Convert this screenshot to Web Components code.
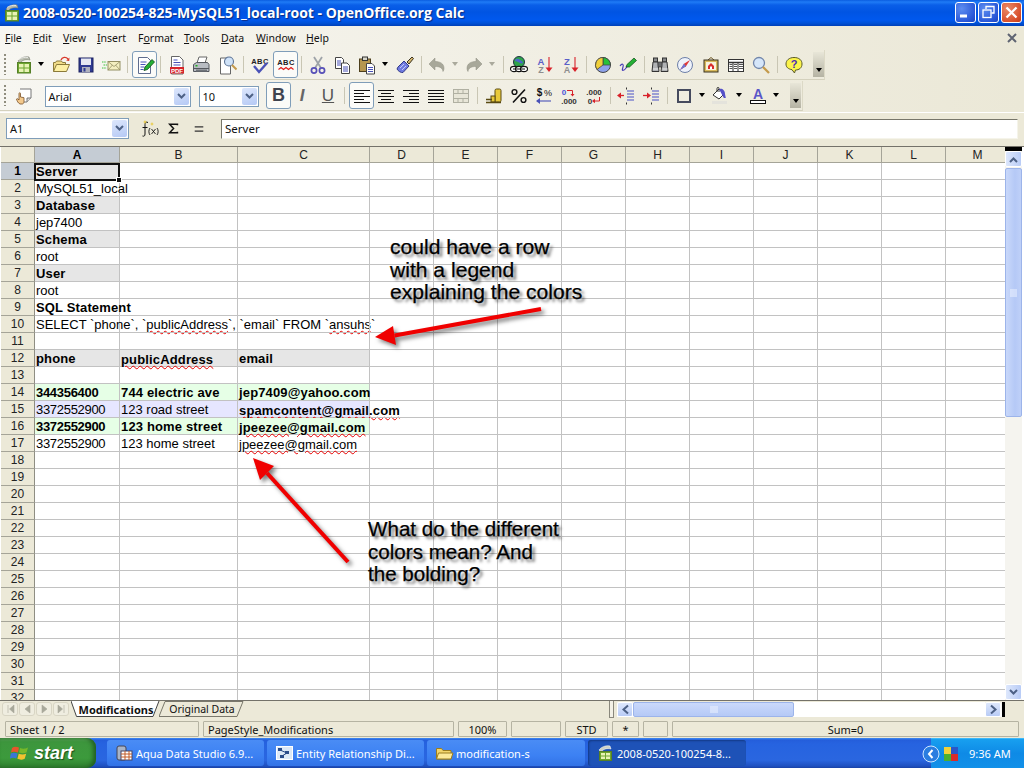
<!DOCTYPE html>
<html><head><meta charset="utf-8"><title>OpenOffice.org Calc</title>
<style>
html,body{margin:0;padding:0;background:#ece9d8;}
body{width:1024px;height:768px;overflow:hidden;position:relative;font-family:"Noto Sans","Liberation Sans",sans-serif;}
#page{display:flex;flex-direction:column;width:1024px;height:768px;}
</style></head><body>
<div id="page">
<xp-titlebar>2008-0520-100254-825-MySQL51_local-root - OpenOffice.org Calc</xp-titlebar>
<xp-menubar></xp-menubar>
<xp-toolbar row="1"></xp-toolbar>
<xp-toolbar row="2"></xp-toolbar>
<xp-formula></xp-formula>
<xp-sheet></xp-sheet>
<xp-tabs></xp-tabs>
<xp-status></xp-status>
<xp-taskbar></xp-taskbar>
</div>
<sheet-note style="left:390px;top:236px;font-size:21.1px">could have a row<br>with a legend<br>explaining the colors</sheet-note>
<sheet-note style="left:368px;top:518px;font-size:20.6px">What do the different<br>colors mean? And<br>the bolding?</sheet-note>
<sheet-arrow x1="541" y1="309" x2="375" y2="337" h1="393,326" h2="396,345"></sheet-arrow>
<sheet-arrow x1="348" y1="562" x2="253" y2="458" h1="274,466" h2="260,480"></sheet-arrow>
<script>
const ICONS={
new:`<path d="M4 6C6 3 11 1 15 2l1 3C12 4 8 5 6 8z" fill="#b9bdb0" stroke="#7c7f74" stroke-width=".6"/><path d="M5 4.500c3-2 6-2.500 9-2" stroke="#fff" fill="none" stroke-width=".7"/><rect x="3.500" y="7.500" width="13" height="10.500" fill="#6da52f" stroke="#557f27"/><path d="M5 9h4.500v3.500H5zM10.500 9H15v3.500h-4.500zM5 13.500h4.500V17H5zM10.500 13.500H15V17h-4.500z" fill="#e8f3b5"/>`,
open:`<path d="M2.500 16.500V7.500h2l1-1.500h5l1 1.500h3v2" fill="#f1dc88" stroke="#8b7a3a"/><path d="M2.500 16.500l3-7h13l-3 7z" fill="#fdf0a4" stroke="#8b7a3a"/><path d="M10 5C11 2 15 1.500 17 4" fill="none" stroke="#d8382a" stroke-width="1.300"/><path d="M18.500 2.500l-.3 3.500-3-.5z" fill="#d8382a"/>`,
save:`<rect x="3" y="3" width="14" height="14" fill="#2f3a92" stroke="#1c2260"/><rect x="5" y="3.500" width="10" height="6.500" fill="#e6e8f2"/><rect x="6" y="12" width="8" height="5" fill="#aeb0bd"/><rect x="7.500" y="13" width="2" height="3.500" fill="#2f3a92"/>`,
mail:`<rect x="7" y="6.500" width="12" height="8.500" fill="#f4efc0" stroke="#948f63"/><path d="M7 6.500l6 5 6-5M7 15l4.500-5M19 15l-4.500-5" fill="none" stroke="#948f63" stroke-width=".8"/><path d="M1 7h4.500M2.500 10h3.500M1 13h4.500" stroke="#3fc23f" stroke-width="1" stroke-dasharray="1.500 .7"/>`,
edit:`<path d="M3.500 2.500h9l3 3v13h-12z" fill="#fff" stroke="#5f6d8e"/><path d="M5.500 7h6M5.500 9.500h5M5.500 12h4M5.500 14.500h3" stroke="#4a52b8" stroke-width="1"/><path d="M9 15.500l1-3.500L17 4.500l2.500 2.500-7 7.500z" fill="#25b035" stroke="#0c4a15" stroke-width=".8"/>`,
pdf:`<path d="M4.500 1.500h8l3.500 3.500v14H4.500z" fill="#fff" stroke="#666"/><path d="M6.500 5h4M6.500 7.500h7M6.500 10h7" stroke="#4a52b8"/><rect x="3" y="12" width="14" height="6.500" fill="#d6242a"/><text x="10" y="17.500" font-size="6" font-weight="bold" fill="#fff" text-anchor="middle" font-family="Liberation Sans">PDF</text>`,
print:`<path d="M6 8l2-6h8l-2 6z" fill="#fff" stroke="#666"/><path d="M2.500 9.500l3-2h11l1.500 2v7H2.500z" fill="#b8bcc2" stroke="#55585e"/><path d="M2.500 13.500h15.500" stroke="#55585e"/><rect x="4.500" y="10" width="2" height="1.500" fill="#22b222"/><rect x="5" y="14.500" width="11" height="2" fill="#70747a"/>`,
prev:`<path d="M3.500 3h7l3 3v13h-10z" fill="#fff" stroke="#666"/><circle cx="12" cy="6.500" r="4.500" fill="#cfe2f8" stroke="#5d7496" stroke-width="1.100"/><path d="M15 10l4.500 4.500" stroke="#c49a4c" stroke-width="2"/>`,
spell:`<text x="10" y="8.500" font-size="7.500" font-weight="bold" fill="#222" text-anchor="middle" font-family="Liberation Sans" letter-spacing=".4">ABC</text><path d="M4 11l5 6 8-9" fill="none" stroke="#4a52b8" stroke-width="2.400"/>`,
aspell:`<text x="10" y="10" font-size="7.500" font-weight="bold" fill="#222" text-anchor="middle" font-family="Liberation Sans" letter-spacing=".4">ABC</text><path d="M2.500 14.500l2.500-2 2.500 2 2.500-2 2.500 2 2.500-2 2.500 2" fill="none" stroke="#e01818" stroke-width="1.100"/>`,
cut:`<path d="M6 2l7 11M14 2L7 13" stroke="#9ea3a8" stroke-width="1.800"/><circle cx="6" cy="15.500" r="2.600" fill="none" stroke="#5750b8" stroke-width="1.700"/><circle cx="14" cy="15.500" r="2.600" fill="none" stroke="#5750b8" stroke-width="1.700"/>`,
copy:`<path d="M3.500 2.500h6l2 2v9h-8z" fill="#fff" stroke="#444"/><path d="M5 6h4M5 8h4M5 10h4" stroke="#4a52b8"/><path d="M9.500 8h5.500l2.500 2.500v8h-8z" fill="#fff" stroke="#444"/><path d="M11 12h5M11 14h5M11 16h5" stroke="#4a52b8"/>`,
paste:`<rect x="2.500" y="4" width="11" height="12.500" fill="#b6964f" stroke="#4d3f1c"/><rect x="5.500" y="2" width="5" height="3.500" fill="#d6d6ca" stroke="#333"/><path d="M9.500 8.500h5.500l2.500 2.500v8h-8z" fill="#fff" stroke="#444"/><path d="M11 12.500h5M11 14.500h5M11 16.500h5" stroke="#4a52b8"/>`,
brush:`<path d="M3 12l6-6 5 5-6 6.500C6 18 3 16 2 14z" fill="#6f7ae0" stroke="#333a88"/><path d="M5 13l4-4M7 15l4-4" stroke="#c5cbf4"/><path d="M12 7l5-5 1.500 1.500L14 9z" fill="#d3b56d" stroke="#3b3320"/>`,
undo:`<path d="M2 9l6-6v3.500c5 0 9 2 9 7 0 1-.3 2-1 3-.5-3.500-3-5-8-5V15z" fill="#a8a89a" stroke="#8d8d80" stroke-width=".5"/>`,
redo:`<path d="M18 9l-6-6v3.500c-5 0-9 2-9 7 0 1 .3 2 1 3 .5-3.500 3-5 8-5V15z" fill="#a8a89a" stroke="#8d8d80" stroke-width=".5"/>`,
globe:`<circle cx="10" cy="7" r="5.500" fill="#2ea44a" stroke="#234"/><path d="M6 5c2-2 4-1 5 0s3 1 3 3c-2 1-3 0-5-1s-3 0-3-2z" fill="#4c66c8"/><g fill="#fff" stroke="#111" stroke-width="1.100"><ellipse cx="5" cy="14" rx="3.500" ry="2.600"/><ellipse cx="10" cy="14" rx="3.500" ry="2.600"/><ellipse cx="15" cy="14" rx="3.500" ry="2.600"/></g><path d="M4 14h12" stroke="#111"/>`,
az:`<text x="7" y="9.500" font-size="9.500" font-weight="bold" fill="#5a60c8" text-anchor="middle" font-family="Liberation Sans">A</text><text x="7" y="18" font-size="9" font-weight="bold" fill="#8e8e8e" text-anchor="middle" font-family="Liberation Sans">Z</text><path d="M15 2v12" stroke="#d8222a" stroke-width="1.100"/><path d="M11.500 12.500h7L15 17z" fill="#d8222a"/>`,
za:`<text x="7" y="9.500" font-size="9.500" font-weight="bold" fill="#5a60c8" text-anchor="middle" font-family="Liberation Sans">Z</text><text x="7" y="18" font-size="9" font-weight="bold" fill="#8e8e8e" text-anchor="middle" font-family="Liberation Sans">A</text><path d="M15 2v12" stroke="#d8222a" stroke-width="1.100"/><path d="M11.500 12.500h7L15 17z" fill="#d8222a"/>`,
chart:`<circle cx="10" cy="10" r="7.500" fill="#8ea2ea" stroke="#444"/><path d="M10 10V2.500A7.500 7.500 0 0 1 17.500 10z" fill="#27c03a" stroke="#444" stroke-width=".8"/><path d="M10 10V2.500A7.500 7.500 0 0 0 4 14.500z" fill="#f0cf3a" stroke="#444" stroke-width=".8"/>`,
draw:`<path d="M2 11c2-3 4-2 3 1s-1 4 1 3 2-3 4-4" fill="none" stroke="#4a3fb8" stroke-width="1.200"/><path d="M8 12l1-2.500L16 3l2.500 2.500-7 6.500z" fill="#25b035" stroke="#0c4a15" stroke-width=".7"/>`,
find:`<rect x="3.500" y="3" width="4" height="4" fill="#888a8c" stroke="#333"/><rect x="12.500" y="3" width="4" height="4" fill="#888a8c" stroke="#333"/><path d="M3 7h5l1 9.500H2zM12 7h5l1 9.500h-7z" fill="#b0b2b4" stroke="#333"/><rect x="8" y="7" width="4" height="5" fill="#6a6c6e" stroke="#333" stroke-width=".7"/><path d="M3 14h5M12.500 14h5" stroke="#eee"/>`,
nav:`<circle cx="10" cy="10" r="7.500" fill="#eef2fa" stroke="#6d7fa8"/><path d="M15 5l-6 3.800-4 6.200 6-3.800z" fill="#e03838"/><path d="M9 8.800L5 15l6-3.800z" fill="#6a78d8"/>`,
gallery:`<path d="M7 5l3-2.500L13 5" fill="none" stroke="#6a5320"/><rect x="3" y="5" width="14" height="12" fill="#d8b95a" stroke="#3a3320"/><rect x="5" y="7" width="10" height="8" fill="#f7f2dc"/><path d="M7 11l3-3 3 3v3H7z" fill="#d92b2b"/><rect x="9" y="11.500" width="2" height="2.500" fill="#fff"/>`,
table:`<rect x="2.500" y="4.500" width="15" height="12" fill="#fff" stroke="#333"/><path d="M2.500 7.500h15" stroke="#333" stroke-width="1.500"/><path d="M7 7v9.500M12 7v9.500" stroke="#333"/><path d="M8 9.500h3M13 9.500h4M8 11.500h3M13 11.500h4M8 13.500h3M13 13.500h4M3.500 9.500h3M3.500 11.500h3M3.500 13.500h3" stroke="#555"/>`,
zoom:`<circle cx="8" cy="8" r="5.500" fill="#d5e6fa" stroke="#7286aa" stroke-width="1.300"/><path d="M12 12l6 6" stroke="#c49a4c" stroke-width="2.300"/>`,
help:`<path d="M10 2.500c5 0 8 2.500 8 6.500s-3 6-6.500 6l-1 3-2.500-3.300C4.500 14 2 12.500 2 9s3-6.500 8-6.500z" fill="#fbf34a" stroke="#5a5a2a"/><text x="10" y="13" font-size="11" font-weight="bold" fill="#4a2eb0" text-anchor="middle" font-family="Liberation Sans">?</text>`,
style:`<path d="M6 3h11v9l-4 4H8" fill="#fff" stroke="#777"/><path d="M13 16v-4h4" fill="#ddd" stroke="#777"/><path d="M6 18c-2-1-3-3-3.500-5l1.200-.3L5 14V7.500c0-1 1.500-1 1.500 0V11l3.500.7v3.800c0 1.500-1 2.500-1.500 2.500z" fill="#f3c98d" stroke="#7a5128" stroke-width=".8"/>`,
left:`<path d="M2 4.500h16M2 7.500h10M2 10.500h16M2 13.500h10M2 16.500h16" stroke="#111" stroke-width="1"/>`,
center:`<path d="M2 4.500h16M5 7.500h10M2 10.500h16M5 13.500h10M2 16.500h16" stroke="#111" stroke-width="1"/>`,
right:`<path d="M2 4.500h16M8 7.500h10M2 10.500h16M8 13.500h10M2 16.500h16" stroke="#111" stroke-width="1"/>`,
just:`<path d="M2 4.500h16M2 7.500h16M2 10.500h16M2 13.500h16M2 16.500h16" stroke="#111" stroke-width="1"/>`,
merge:`<rect x="2.500" y="3.500" width="15" height="13" fill="#e8e6d8" stroke="#b0b0a2"/><path d="M2.500 7.500h15M2.500 12.500h15M7 3.500v4M12 3.500v4M7 12.500v4M12 12.500v4" stroke="#b0b0a2"/>`,
coin:`<rect x="11" y="3" width="6" height="13" rx="1.500" fill="#e8c93a" stroke="#5a4a12"/><rect x="7" y="10" width="4" height="6" fill="#e8c93a" stroke="#5a4a12"/><path d="M2 13.500h6M2 16.500h15" stroke="#5a4a12" stroke-width="1.400"/>`,
pct:`<circle cx="5.500" cy="6" r="2.400" fill="none" stroke="#111" stroke-width="1.400"/><circle cx="14.500" cy="14" r="2.400" fill="none" stroke="#111" stroke-width="1.400"/><path d="M16 3.500L4 16.500" stroke="#111" stroke-width="1.600"/>`,
cur:`<text x="5.500" y="10" font-size="10" font-weight="bold" fill="#111" text-anchor="middle" font-family="Liberation Sans">$</text><text x="14" y="10" font-size="9" fill="#111" text-anchor="middle" font-family="Liberation Sans">%</text><path d="M3 15h14" stroke="#4a52b8" stroke-width="1.100"/><path d="M2 15l4-3v6z" fill="#4a52b8"/>`,
decadd:`<text x="5" y="8.500" font-size="8" font-weight="bold" fill="#4a52d8" text-anchor="middle" font-family="Liberation Sans">0</text><path d="M8 4.500h5.500V9" fill="none" stroke="#d8222a"/><path d="M11.500 8h4l-2 2.500z" fill="#d8222a"/><text x="10" y="17.500" font-size="8" font-weight="bold" fill="#333" text-anchor="middle" font-family="Liberation Sans">.000</text>`,
decdel:`<text x="10" y="8.500" font-size="8" font-weight="bold" fill="#333" text-anchor="middle" font-family="Liberation Sans">.000</text><text x="6" y="17.500" font-size="8" font-weight="bold" fill="#333" text-anchor="middle" font-family="Liberation Sans">0</text><path d="M15.500 11v4H10" fill="none" stroke="#d8222a"/><path d="M11 12.800v4.400L8 15z" fill="#d8222a"/>`,
inddec:`<path d="M10.500 1.500v2M10.500 16.500v2" stroke="#333"/><path d="M11 5h7M11 8h7M11 11h7M11 14h7" stroke="#4a52c8" stroke-width="1.100"/><path d="M8 9.500H3" stroke="#d8222a" stroke-width="1.300"/><path d="M1 9.500l4-3v6z" fill="#d8222a"/>`,
indinc:`<path d="M10.500 1.500v2M10.500 16.500v2" stroke="#333"/><path d="M11 5h7M11 8h7M11 11h7M11 14h7" stroke="#4a52c8" stroke-width="1.100"/><path d="M2 9.500h5" stroke="#d8222a" stroke-width="1.300"/><path d="M10 9.500l-4-3v6z" fill="#d8222a"/>`,
border:`<rect x="4" y="4" width="12" height="12" fill="none" stroke="#454a5e" stroke-width="2"/>`,
bucket:`<path d="M3 9l6-6 5 5-5 5z" fill="#fff" stroke="#333"/><path d="M7 6V2.500c0-1.500 2-1.500 2 0V6" fill="none" stroke="#333"/><path d="M9 3c3-1 6 1 6 5l.8 4-2 0z" fill="#5550c8"/><rect x="2" y="15" width="15" height="3" fill="#e4e3dc"/>`,
fcolor:`<text x="10" y="13" font-size="14" font-weight="bold" fill="#5a55c8" text-anchor="middle" font-family="Liberation Sans">A</text><rect x="2.500" y="14.500" width="15" height="3" fill="#fff" stroke="#111"/>`
};
const svg=(n,w=20,h=20)=>`<svg width="${w}" height="${h}" viewBox="0 0 ${w} ${h}">${ICONS[n]||''}</svg>`;
const shadow=(el,html)=>{const r=el.attachShadow({mode:'open'});r.innerHTML=html;return r;};
const UI='"Noto Sans","Liberation Sans",sans-serif';

class XpTitlebar extends HTMLElement{constructor(){super();shadow(this,`<style>
:host{display:flex;align-items:center;height:26px;flex:none;box-sizing:border-box;padding:0 2px 1px 2px;
background:linear-gradient(180deg,#0a5de0 0,#1f7bf6 2px,#0a5fe8 5px,#0054e3 12px,#0058ee 20px,#0052d8 23px,#0040b8 26px);}
.ic{width:20px;height:20px;flex:none}
.t{flex:1;margin-left:1px;color:#fff;font:bold 14px "Open Sans","Liberation Sans",sans-serif;white-space:nowrap;text-shadow:1px 1px 1px #0b2a80;}
.b{width:21px;height:21px;margin-left:2px;box-sizing:border-box;border:1px solid #fff;border-radius:3px;flex:none;display:flex;align-items:center;justify-content:center;
background:radial-gradient(circle at 30% 30%,#5d8df0,#2a58d8 70%,#1c45c0);}
.c{background:radial-gradient(circle at 30% 30%,#ea8a68,#d9512c 70%,#c23c1a);}
</style><span class="ic">${svg('new')}</span><span class="t"><slot></slot></span>
<span class="b"><svg width="19" height="19"><rect x="4" y="11.500" width="7" height="3" fill="#fff"/></svg></span>
<span class="b"><svg width="19" height="19"><path d="M7 6V3.500h8V10h-2.500" fill="none" stroke="#fff" stroke-width="1.300"/><rect x="4" y="7" width="8" height="7.500" fill="none" stroke="#fff" stroke-width="1.300"/></svg></span>
<span class="b c"><svg width="19" height="19"><path d="M4.500 4.500l10 10M14.500 4.500l-10 10" stroke="#fff" stroke-width="2.300"/></svg></span>`);}}
customElements.define('xp-titlebar',XpTitlebar);

class XpMenubar extends HTMLElement{constructor(){super();
const m=[['F','ile',28],['E','dit',30],['V','iew',34],['I','nsert',41],['F|o','rmat',46],['T','ools',37],['D','ata',35],['W','indow',50],['H','elp',40]];
const h=m.map(([a,b,w])=>{let s;if(a.includes('|')){const[p,q]=a.split('|');s=`${p}<u>${q}</u>${b}`}else s=`<u>${a}</u>${b}`;return `<span style="width:${w}px">${s}</span>`}).join('');
shadow(this,`<style>:host{display:flex;align-items:center;height:24px;flex:none;box-sizing:border-box;padding-left:5px;padding-right:5px;
background:linear-gradient(90deg,#f7f6f1,#ebe8d7);font:10.5px ${UI};color:#111;}
span{display:block;flex:none}.x{margin-left:auto;width:14px;height:14px}u{text-underline-offset:1px}</style>${h}
<svg class="x" viewBox="0 0 14 14"><path d="M3 3l8 8M11 3l-8 8" stroke="#5f6472" stroke-width="2"/></svg>`);}}
customElements.define('xp-menubar',XpMenubar);

class ToolBtn extends HTMLElement{constructor(){super();shadow(this,`<style>
:host{display:flex;align-items:center;justify-content:center;flex:none;box-sizing:border-box;height:100%}
:host([active]){background:#fbfbf8;border:1px solid #7f9db9;border-radius:3px;margin-top:1px;margin-bottom:1px;height:auto;align-self:stretch;}
svg{display:block}</style><span id="c" style="display:contents"></span>`);}
connectedCallback(){this.shadowRoot.getElementById('c').innerHTML=svg(this.getAttribute('icon'),+this.getAttribute('w')||20);}}
customElements.define('tool-btn',ToolBtn);

class XpCombo extends HTMLElement{constructor(){super();shadow(this,`<style>
:host{display:flex;align-items:center;flex:none;box-sizing:border-box;height:21px;background:#fff;border:1px solid #7f9db9;padding:1px;font:11px ${UI};color:#111;}
span{flex:1;padding-left:2px;white-space:nowrap}
i{display:flex;align-items:center;justify-content:center;width:15px;height:100%;flex:none;border-radius:2px;background:linear-gradient(160deg,#dde7fc,#b5c9f5);}
</style><span><slot></slot></span><i><svg width="11" height="9"><path d="M2 2l3.500 3.500L9 2" fill="none" stroke="#4d6185" stroke-width="2"/></svg></i>`);}}
customElements.define('xp-combo',XpCombo);

const ROW1=[['new',24,25],['ar',41],['open',61],['save',86],['mail',111],['s',127],['edit',144.5,25,1],['s',160],['pdf',177],['print',201],['prev',227],['s',243],['spell',260],['aspell',285.5,25,1],['s',301],['cut',318],['copy',342],['paste',367],['ar',385],['brush',405],['s',421],['undo',437],['arg',455],['redo',474],['arg',492],['s',503],['globe',519],['az',544],['za',570],['s',586],['chart',603],['draw',628],['s',644],['find',660],['nav',685],['gallery',711],['table',736],['zoom',761],['s',777],['help',794]];
const ROW2=[['style',24,25],['combo',117.5,146,'Arial'],['combo',228.5,60,'10'],['B',278.5,25,1],['I',302],['U',328],['s',344],['left',361.5,25,1],['center',386],['right',411],['just',436],['merge',461],['s',477],['coin',494],['pct',519],['cur',544],['decadd',569],['decdel',594],['s',610],['inddec',626],['indinc',651],['s',667],['border',684],['ar',702],['bucket',720],['ar',739],['fcolor',758],['ar',776]];
class XpToolbar extends HTMLElement{constructor(){super();shadow(this,`<style>
:host{display:block;height:31px;flex:none;box-sizing:border-box;background:linear-gradient(90deg,#f7f6f1,#ebe8d7);}
.bar{display:flex;align-items:stretch;height:30px;box-sizing:border-box;border-right:1px solid #dcd9c6;border-bottom:1px solid #d4d1bd;position:relative;}
.grip{width:2px;margin:4px 0 4px 4px;flex:none;background:repeating-linear-gradient(180deg,#8f8d7e 0,#8f8d7e 2px,transparent 2px,transparent 4px);}
.sep{width:1px;flex:none;background:#c9c6b4;margin-top:6px;margin-bottom:6px}
.ar{width:10px;flex:none;display:flex;align-items:center;justify-content:center}
.more{width:11px;flex:none;margin:2px 0;position:relative;background:linear-gradient(180deg,#e8e6d8,#b5b3a3);}
.more:after{content:"";position:absolute;left:3px;bottom:5px;border:3px solid transparent;border-top:4px solid #000;border-bottom:0;width:0;height:0}
</style><div class="bar" id="b"></div>`);}
connectedCallback(){const row=this.getAttribute('row');const items=row==='1'?ROW1:ROW2;
const b=this.shadowRoot.getElementById('b');const barW=row==='1'?825:803;b.style.width=barW+'px';
const grip=document.createElement('div');grip.className='grip';b.append(grip);let x=6;
const put=(el,c,w)=>{const left=c-w/2;el.style.marginLeft=(left-x)+'px';el.style.width=w+'px';x=left+w;b.append(el);};
for(const it of items){const[n,c,w,act]=it;let el;
 if(n==='s'){el=document.createElement('div');el.className='sep';put(el,c,1);}
 else if(n==='ar'||n==='arg'){el=document.createElement('div');el.className='ar';el.innerHTML=`<svg width="8" height="5"><path d="M1 0h6L4 4z" fill="${n==='ar'?'#000':'#aaa99c'}"/></svg>`;put(el,c,10);}
 else if(n==='combo'){el=document.createElement('xp-combo');el.style.alignSelf='center';el.style.marginTop='1px';el.textContent=it[3];put(el,c,w);}
 else if(n==='B'||n==='I'||n==='U'){el=document.createElement('tool-txt');if(act)el.setAttribute('active','');el.setAttribute('k',n);put(el,c,25);}
 else{el=document.createElement('tool-btn');el.setAttribute('icon',n);if(act)el.setAttribute('active','');put(el,c,w||25);}
}
const more=document.createElement('div');more.className='more';const mc=row==='1'?818:795.5;put(more,mc,11);}
}
class ToolTxt extends HTMLElement{constructor(){super();shadow(this,`<style>
:host{display:flex;align-items:center;justify-content:center;flex:none;box-sizing:border-box}
:host([active]){background:#fbfbf8;border:1px solid #7f9db9;border-radius:3px;margin-top:1px;margin-bottom:1px;}
span{font:17px "Liberation Sans",sans-serif;color:#3f4450}</style><span id="s"></span>`);}
connectedCallback(){const k=this.getAttribute('k'),s=this.shadowRoot.getElementById('s');s.textContent=k;
if(k==='B')s.style.fontWeight='bold',s.style.fontSize='18px';if(k==='I')s.style.fontStyle='italic',s.style.fontWeight='bold',s.style.color='#666';if(k==='U')s.style.textDecoration='underline',s.style.color='#555';}}
customElements.define('tool-txt',ToolTxt);
customElements.define('xp-toolbar',XpToolbar);

class XpFormula extends HTMLElement{constructor(){super();shadow(this,`<style>
:host{display:flex;align-items:center;height:34px;flex:none;box-sizing:border-box;background:#ece9d8;border-top:1px solid #fff;padding:0 6px 2px 6px;font:11px ${UI};color:#111;}
xp-combo{width:123px;}
.i{width:25px;flex:none;text-align:center;color:#111;display:flex;justify-content:center}
.in{margin-left:10px;flex:1;height:20px;box-sizing:border-box;background:#fff;border:1px solid #f5f4ea;border-top:1px solid #77766a;border-left:1px solid #77766a;padding-left:3px;line-height:18px;font-size:11.5px;}
</style><xp-combo>A1</xp-combo>
<span class="i" style="margin-left:7px"><svg width="20" height="20" viewBox="0 0 20 20"><path d="M9 3.500c-2-1-3 0-3 2V15c0 2-1 2.500-2.500 2M3.500 8.500h5" fill="none" stroke="#111"/><path d="M11 9c-1.500 2-1.500 5 0 7M18 9c1.500 2 1.500 5 0 7M12.500 10l4 5M16.500 10l-4 5" fill="none" stroke="#111" stroke-width=".9"/><path d="M6 1l.7 1.500L8 3l-1.300.5L6 5l-.7-1.500L4 3l1.300-.5zM13 3l.6 1.400L15 5l-1.400.6L13 7l-.6-1.400L11 5l1.400-.6z" fill="#e8c93a"/></svg></span>
<span class="i"><svg width="11" height="11" viewBox="0 0 14 14"><path d="M12 3V1.500H2L7 7l-5 5.500h10V11" fill="none" stroke="#111" stroke-width="2"/></svg></span>
<span class="i"><svg width="12" height="12" viewBox="0 0 14 14"><path d="M2 4.500h10M2 9.500h10" stroke="#333" stroke-width="1.300"/></svg></span>
<span class="in">Server</span>`);}}
customElements.define('xp-formula',XpFormula);

const U=t=>`<b-u>${t}</b-u>`;
class BU extends HTMLElement{constructor(){super();shadow(this,`<style>:host{display:inline;text-decoration:underline wavy #e80000 1px;text-underline-offset:1px;}</style><slot></slot>`);}}
customElements.define('b-u',BU);

const CELLS={
'1A':['Server','b gy'],'2A':['MySQL51_local',''],'3A':['Database','b gy'],'4A':['jep7400',''],'5A':['Schema','b gy'],'6A':['root',''],'7A':['User','b gy'],'8A':['root',''],
'9A':['SQL Statement','b'],'10A':["SELECT `phone`, `"+U('publicAddress')+"`, `email` FROM `"+U('ansuhs')+"`",''],
'12A':['phone','b gy'],'12B':[U('publicAddress'),'b gy low'],'12C':['email','b gy'],
'14A':['344356400','b gr n'],'14B':['744 electric ave','b gr'],'14C':['jep7409@yahoo.com','b gr'],
'15A':['3372552900','bl n'],'15B':['123 road street','bl'],'15C':[U('spamcontent@gmail.com'),'b bl low'],
'16A':['3372552900','b gr n'],'16B':['123 home street','b gr'],'16C':[U('jpeezee@gmail.com'),'b gr low'],
'17A':['3372552900','n'],'17B':['123 home street',''],'17C':[U('jpeezee@gmail.com'),'low']};
class XpSheet extends HTMLElement{constructor(){super();
const cols='ABCDEFGHIJKLM'.split('');
let h=`<div class="corner"></div>`+cols.map(c=>`<div class="ch${c==='A'?' sel':''}">${c}</div>`).join('');
for(let r=1;r<=32;r++){h+=`<div class="rh${r===1?' sel':''}">${r}</div>`;
 for(const c of cols){const d=CELLS[r+c];h+=d?`<div class="c ${d[1]}">${d[0]}</div>`:`<div class="c"></div>`;}}
shadow(this,`<style>
:host{display:flex;height:554px;flex:none;box-sizing:border-box;border-top:1px solid #74726a;background:#fff;overflow:hidden;position:relative;}
.wrap{flex:none;width:1005px;overflow:hidden;position:relative;}
.grid{display:grid;width:1009px;margin-left:1px;grid-template-columns:34px 85px 118px 132px repeat(10,64px);grid-template-rows:16px repeat(32,17px);font:13px "Liberation Sans",sans-serif;color:#000;}
.corner,.ch,.rh{background:#ece9d8;box-sizing:border-box;border-right:1px solid #a5a498;border-bottom:1px solid #a5a498;display:flex;align-items:center;justify-content:center;font-size:12px;color:#222;}
.rh{border-right:1px solid #8f8e83}
.sel{background:#c5ccd4;font-weight:bold;color:#000}
.c{box-sizing:border-box;border-right:1px solid #c2c2c2;border-bottom:1px solid #c2c2c2;padding-left:1px;white-space:nowrap;line-height:17px;overflow:visible;min-width:0;}
.b{font-weight:bold;letter-spacing:.15px}.n{letter-spacing:-.3px}
.gy{background:#e6e6e6}
.gr{background:#e6ffe6}.bl{background:#e6e6ff}.low{padding-top:1px}
.cur{position:absolute;left:34px;top:16px;width:86px;height:18px;box-sizing:border-box;border:2px solid #111;pointer-events:none}
.cur:after{content:"";position:absolute;right:-4px;bottom:-4px;width:4px;height:4px;background:#111;border:1px solid #fff}
.v{flex:none;width:17px;margin-right:2px;display:flex;flex-direction:column;background:#f5f4ef;}
.blk{height:4px;background:#000;flex:none}
.sb{height:16px;flex:none;box-sizing:border-box;border:1px solid #fff;border-radius:2px;background:linear-gradient(90deg,#dde7fc,#b9ccf6);display:flex;align-items:center;justify-content:center}
.th{height:249px;flex:none;box-sizing:border-box;border:1px solid #9cb4ea;border-radius:2px;background:linear-gradient(90deg,#c9d8fa,#b5c9f6 60%,#bfd0f8);display:flex;align-items:center;justify-content:center;margin-top:1px}
.sp{flex:1}
</style><div class="wrap"><div class="grid">${h}</div><div class="cur"></div></div>
<div class="v"><div class="blk"></div><div class="sb"><svg width="11" height="9"><path d="M2 7l3.500-3.500L9 7" fill="none" stroke="#4d6185" stroke-width="2"/></svg></div>
<div class="th"><svg width="7" height="8"><path d="M0 1h7M0 3h7M0 5h7M0 7h7" stroke="#eef3ff"/></svg></div><div class="sp"></div>
<div class="sb"><svg width="11" height="9"><path d="M2 2l3.500 3.500L9 2" fill="none" stroke="#4d6185" stroke-width="2"/></svg></div></div>`);}}
customElements.define('xp-sheet',XpSheet);

class XpTabs extends HTMLElement{constructor(){super();
const nav=['M5 3v8M11 3L6.500 7l4.500 4z','M10 3L5 7l5 4z','M5 3l5 4-5 4z','M10 3v8M4 3l4.500 4L4 11z'].map(d=>`<span class="n"><svg width="15" height="14"><path d="${d}" fill="#a8a89a" stroke="#a8a89a" stroke-width=".6"/></svg></span>`).join('');
shadow(this,`<style>
:host{display:flex;height:18px;flex:none;box-sizing:border-box;background:#ece9d8;border-top:1px solid #74726a;font:10.5px ${UI};color:#111;align-items:stretch;position:relative;}
.nav{display:flex;gap:1px;padding:1px 0 2px 2px;width:69px;box-sizing:border-box;flex:none}
.n{width:16px;box-sizing:border-box;border:1px solid #d8d5c4;border-radius:3px;background:#efede0;display:flex;align-items:center;justify-content:center}
.tabs{display:flex;flex:none;width:540px;align-items:stretch;margin-bottom:1px}
svg.t{position:absolute;left:0;top:0}
.tab{display:flex;align-items:center;justify-content:center;position:relative;flex:none;height:16px}
.tab span{position:relative;white-space:nowrap}
.sp{width:5px;flex:none;box-sizing:border-box;border:1px solid #8a887c;border-top:0;background:#f3f1e6;height:17px}
.hs{display:flex;flex:none;margin-left:3px;width:388px;align-items:stretch;background:linear-gradient(180deg,#f5f4ee,#fff);margin-top:1px;margin-bottom:1px}
.btn{width:16px;flex:none;box-sizing:border-box;border-radius:2px;border:1px solid #fff;background:linear-gradient(180deg,#dde7fc,#b9ccf6);display:flex;align-items:center;justify-content:center}
.th{width:161px;flex:none;box-sizing:border-box;border:1px solid #9cb4ea;border-radius:2px;background:linear-gradient(180deg,#cad9fb,#b5c9f6);display:flex;align-items:center;justify-content:center}
.gap{flex:1;background:#fff}.blk{width:3px;background:#000;flex:none;margin-left:1px}
</style><div class="nav">${nav}</div>
<div class="tabs">
<div class="tab" style="width:90px;margin-left:2px"><svg class="t" width="90" height="16"><path d="M0 0L5.500 15.500H82L88 0" fill="#fff" stroke="#444"/></svg><span style="font-weight:bold;font-size:11px">Modifications</span></div>
<div class="tab" style="width:86px;margin-left:-2px"><svg class="t" width="86" height="16"><path d="M5 15.500L0 15.500 6 0.500H84L78 15.500z" fill="#ece9d8" stroke="#7a786c"/></svg><span>Original Data</span></div>
</div><div class="sp"></div>
<div class="hs"><div class="btn"><svg width="9" height="11"><path d="M7 1.500L2.500 5.500 7 9.500" fill="none" stroke="#4d6185" stroke-width="2"/></svg></div>
<div class="th"><svg width="8" height="7"><path d="M1 0v7M3 0v7M5 0v7M7 0v7" stroke="#eef3ff"/></svg></div><div class="gap"></div>
<div class="btn"><svg width="9" height="11"><path d="M2 1.500L6.500 5.500 2 9.500" fill="none" stroke="#4d6185" stroke-width="2"/></svg></div><div class="blk"></div></div>`);}}
customElements.define('xp-tabs',XpTabs);

class XpStatus extends HTMLElement{constructor(){super();
const c=[['Sheet 1 / 2',194,'l'],['PageStyle_Modifications',251,'l'],['100%',49,'m'],['',50,'m'],['STD',43,'m'],['*',27,'m'],['',25,'m'],['Sum=0',347,'m']];
shadow(this,`<style>
:host{display:flex;gap:4px;height:20px;flex:none;box-sizing:border-box;background:#ece9d8;padding:3px 0 1px 5px;font:11px ${UI};color:#111;}
span{display:flex;align-items:center;box-sizing:border-box;border:1px solid #b5b3a2;border-radius:1px;flex:none;white-space:nowrap;padding-left:4px}
.m{justify-content:center;padding:0}</style>${c.map(([t,w,k])=>`<span class="${k}" style="width:${w}px">${t}</span>`).join('')}`);}}
customElements.define('xp-status',XpStatus);

const TASK={
aqua:`<rect x="2" y="2" width="9" height="14" rx="2" fill="#a8b4c8" stroke="#445"/><rect x="6" y="7" width="11" height="9" fill="#fff" stroke="#446"/><path d="M6 10h11M6 13h11M10 7v9M14 7v9" stroke="#c05a28"/>`,
er:`<rect x="1.500" y="2.500" width="16" height="13" fill="#dce8f6" stroke="#fff"/><rect x="3" y="4" width="4" height="3" fill="#2a4c8a"/><rect x="10" y="7" width="4" height="3" fill="#2a4c8a"/><rect x="5" y="11" width="4" height="3" fill="#2a4c8a"/><path d="M5 6l7 3-5 3" stroke="#2a4c8a" fill="none"/>`,
folder:`<path d="M1.500 15V4.500h5l1.500 2h8V15z" fill="#f2d56c" stroke="#9a7c20"/><path d="M1.500 15l2-6h14.500l-2 6z" fill="#fbe99a" stroke="#9a7c20"/>`,
calc:`<path d="M3 6C5 3 10 1 14 2l1 3C11 4 7 5 5 8z" fill="#cfd2c6" stroke="#fff" stroke-width=".5"/><rect x="3.500" y="7.500" width="12" height="9" fill="#6da52f" stroke="#557f27"/><path d="M5 9h4v2.500H5zM10 9h4v2.500h-4zM5 12.500h4V15H5zM10 12.500h4V15h-4z" fill="#e8f3b5"/>`};
class XpTaskbar extends HTMLElement{constructor(){super();
const b=[['aqua','Aqua Data Studio 6.9...',157,0],['er','Entity Relationship Di...',157,0],['folder','modification-s',158,0],['calc','2008-0520-100254-8...',158,1]];
shadow(this,`<style>
:host{display:flex;height:30px;flex:none;box-sizing:border-box;align-items:stretch;background:linear-gradient(180deg,#3f8cf3 0,#245edb 2px,#2663e0 6px,#2a66e0 22px,#1f50c0 28px,#1941a5 30px);font:11px ${UI};color:#fff;}
.start{width:96px;flex:none;box-sizing:border-box;display:flex;align-items:center;gap:4px;padding-left:10px;border-radius:0 9px 9px 0;background:linear-gradient(180deg,#5aa85a 0,#3d963d 4px,#3c9a3c 20px,#2e7e2e 30px);box-shadow:inset -3px 0 4px #225f22;font:italic bold 18px "Liberation Sans",sans-serif;text-shadow:1px 1px 1px #1c4f1c}
.bs{display:flex;gap:3px;margin-left:11px;padding:2px 0}
.tb{display:flex;align-items:center;gap:2px;box-sizing:border-box;padding-left:8px;border-radius:3px;background:linear-gradient(180deg,#4a8cf5,#3c81f3 60%,#3272e6);white-space:nowrap;flex:none}
.tb.a{background:#1e52b7;box-shadow:inset 1px 1px 2px #133a86;}
.tray{margin-left:auto;width:93px;flex:none;box-sizing:border-box;display:flex;align-items:center;background:linear-gradient(180deg,#18a0f0,#0e8ae6 50%,#1290e8);border-top:1px solid #3cb8f8;position:relative;padding-left:12px;gap:10px;}
.ch{position:absolute;left:-9px;top:6px}
svg{display:block;flex:none}
</style>
<div class="start"><svg width="20" height="20" viewBox="0 0 20 20"><path d="M2 5c2-1.500 4-1.500 7-.5L8 9.500C5 8.500 3 8.500 1 9.500z" fill="#e8552c"/><path d="M10 5c3 1 5 1 8-.5l-1.500 5c-3 1-4.500 1-7.500 0z" fill="#76b82a"/><path d="M.8 10.500c2-1 4-1 6.800 0l-1.300 5c-2.500-1-4.500-1-6.500.3z" fill="#3a76d8"/><path d="M8.700 10.800c3 1 4.800 1 7.500 0l-1.500 5c-3 1.200-4.500 1-7.300 0z" fill="#f2c230"/></svg><span>start</span></div>
<div class="bs">${b.map(([i,t,w,a])=>`<div class="tb${a?' a':''}" style="width:${w}px"><svg width="19" height="18" viewBox="0 0 19 18">${TASK[i]}</svg><span>${t}</span></div>`).join('')}</div>
<div class="tray"><svg class="ch" width="18" height="18"><circle cx="9" cy="9" r="8" fill="#2a7de0" stroke="#cfe6ff"/><path d="M10.500 5L7 9l3.500 4" fill="none" stroke="#fff" stroke-width="2"/></svg>
<svg width="16" height="16"><path d="M1 1h7v7H1z" fill="#f0d23c"/><path d="M8 1h7v7H8z" fill="#2a56c8"/><path d="M1 8h7v7H1z" fill="#4ab030"/><path d="M8 8h7v7H8z" fill="#d92b2b"/></svg><span>9:36 AM</span></div>`);}}
customElements.define('xp-taskbar',XpTaskbar);

class SheetNote extends HTMLElement{constructor(){super();shadow(this,`<style>
:host{display:block;position:absolute;white-space:nowrap;font:18px/22.500px "Liberation Sans",sans-serif;color:#000;-webkit-text-stroke:.25px #000;text-shadow:3px 3px 3px rgba(0,0,0,.55);}
</style><slot></slot>`);}}
customElements.define('sheet-note',SheetNote);

class SheetArrow extends HTMLElement{constructor(){super();shadow(this,`<style>
:host{display:block;position:absolute;left:0;top:0;width:1024px;height:768px;pointer-events:none}
svg{filter:drop-shadow(3px 3px 2px rgba(0,0,0,.5));display:block}</style><svg width="1024" height="768" id="s"></svg>`);}
connectedCallback(){const a=n=>this.getAttribute(n);const x1=+a('x1'),y1=+a('y1'),x2=+a('x2'),y2=+a('y2');
const[h1x,h1y]=a('h1').split(',').map(Number),[h2x,h2y]=a('h2').split(',').map(Number);
this.shadowRoot.getElementById('s').innerHTML=`<line x1="${x1}" y1="${y1}" x2="${(h1x+h2x)/2}" y2="${(h1y+h2y)/2}" stroke="#f00000" stroke-width="4"/><polygon points="${x2},${y2} ${h1x},${h1y} ${h2x},${h2y}" fill="#f00000"/>`;}}
customElements.define('sheet-arrow',SheetArrow);
</script>
</body></html>
